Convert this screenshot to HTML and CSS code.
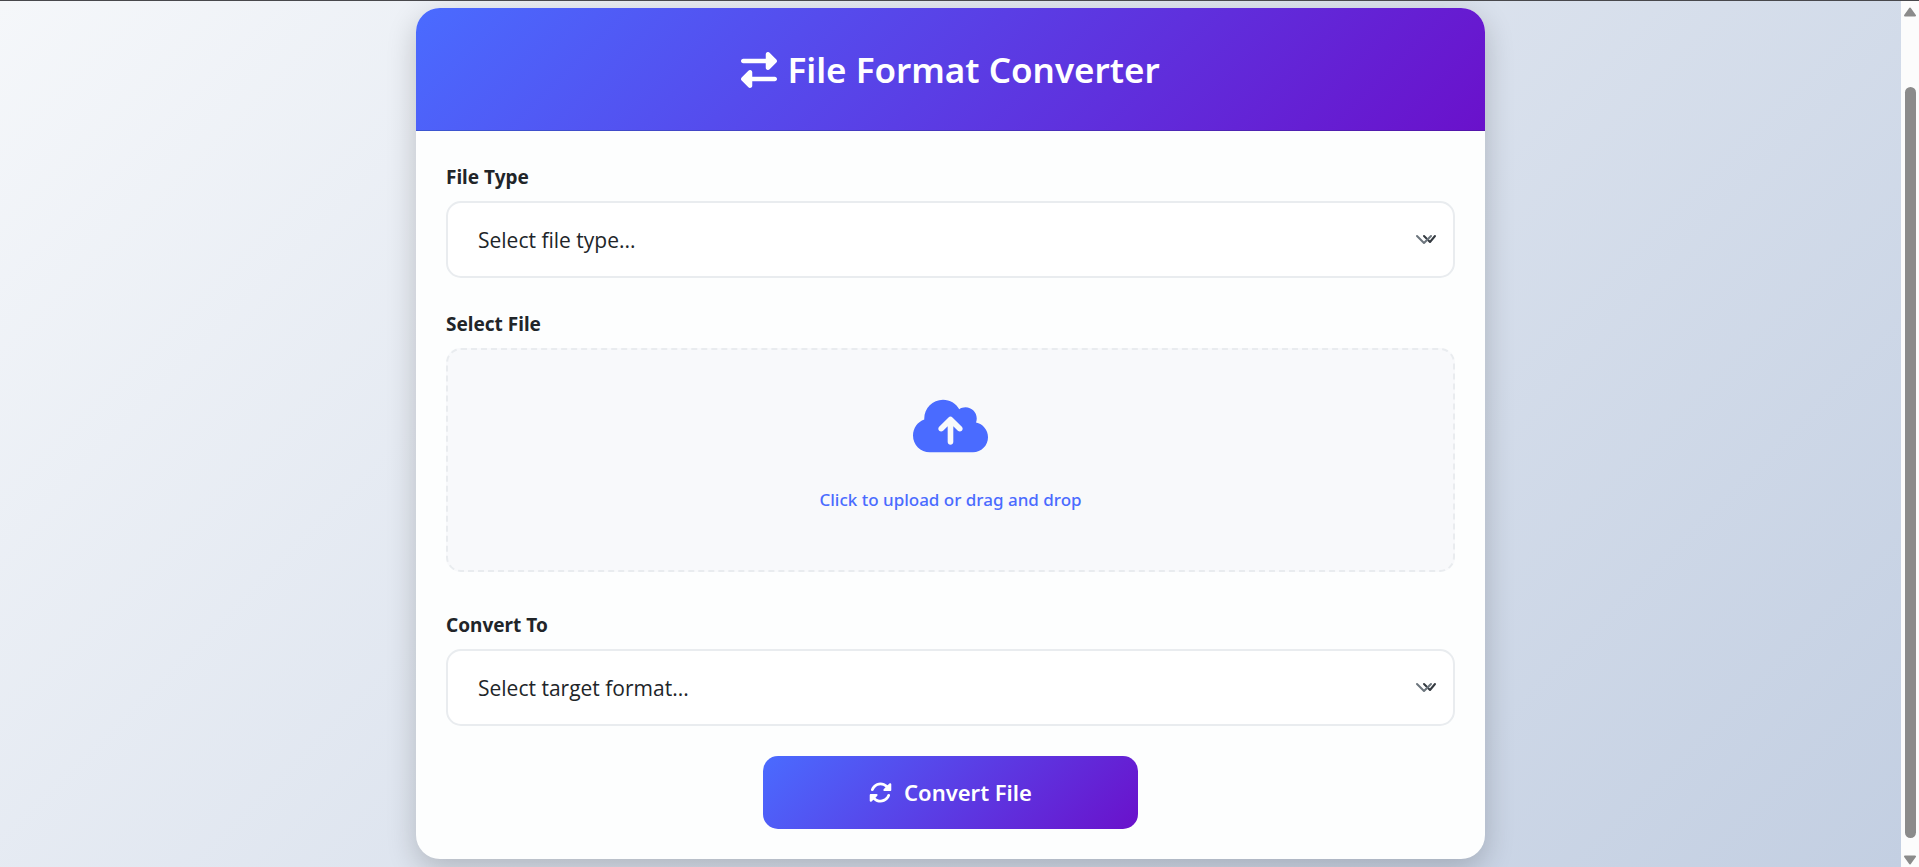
FILE: index.html
```html
<!DOCTYPE html>
<html lang="en">
<head>
<meta charset="utf-8">
<meta name="viewport" content="width=device-width, initial-scale=1">
<title>File Format Converter</title>
<link rel="stylesheet" href="styles.css">
</head>
<body>
<main class="page">
  <section class="card">
    <header class="card-header">
      <h1 class="title">
        <svg class="title-icon" viewBox="0 0 512 512" aria-hidden="true"><path d="M32 96l320 0V32c0-12.900 7.800-24.600 19.800-29.600s25.700-2.200 34.900 6.900l96 96c6 6 9.400 14.100 9.400 22.600s-3.400 16.600-9.400 22.600l-96 96c-9.200 9.200-22.900 11.900-34.900 6.900s-19.800-16.600-19.800-29.600V160L32 160c-17.700 0-32-14.300-32-32s14.300-32 32-32zM480 352c17.700 0 32 14.300 32 32s-14.300 32-32 32H160v64c0 12.900-7.800 24.600-19.800 29.600s-25.700 2.200-34.900-6.900l-96-96c-6-6-9.400-14.100-9.400-22.600s3.400-16.600 9.400-22.600l96-96c9.200-9.200 22.900-11.900 34.900-6.900s19.800 16.600 19.800 29.600l0 64H480z"/></svg>
        <span>File Format Converter</span>
      </h1>
    </header>
    <form class="card-body">
      <div class="field">
        <label class="field-label" for="fileType">File Type</label>
        <div class="select-wrap">
          <select class="select" id="fileType"><option>Select file type...</option></select>
          <svg class="chevrons" viewBox="0 0 22 12" aria-hidden="true"><path class="chevron-dark" d="M9 2l6 6 5-6"/><path class="chevron-gray" d="M2 2l7 7 7-7"/></svg>
        </div>
      </div>
      <div class="field field-upload">
        <label class="field-label" for="file">Select File</label>
        <label class="dropzone">
          <input class="file-input" type="file" id="file">
          <svg class="cloud" viewBox="0 0 640 512" aria-hidden="true"><path d="M144 480C64.500 480 0 415.500 0 336c0-62.800 40.200-116.200 96.200-135.900c-.1-2.700-.2-5.400-.2-8.100c0-88.400 71.600-160 160-160c59.300 0 111 32.200 138.700 80.200C409.900 102 428.300 96 448 96c53 0 96 43 96 96c0 12.200-2.300 23.800-6.400 34.600C596 238.400 640 290.100 640 352c0 70.700-57.300 128-128 128H144zm79-217c-9.400 9.400-9.400 24.600 0 33.900s24.600 9.400 33.900 0l39-39V392c0 13.300 10.700 24 24 24s24-10.700 24-24V257.900l39 39c9.400 9.400 24.600 9.400 33.900 0s9.400-24.600 0-33.900l-80-80c-9.400-9.400-24.600-9.400-33.900 0l-80 80z"/></svg>
          <span class="dropzone-text">Click to upload or drag and drop</span>
        </label>
      </div>
      <div class="field">
        <label class="field-label" for="target">Convert To</label>
        <div class="select-wrap">
          <select class="select" id="target"><option>Select target format...</option></select>
          <svg class="chevrons" viewBox="0 0 22 12" aria-hidden="true"><path class="chevron-dark" d="M9 2l6 6 5-6"/><path class="chevron-gray" d="M2 2l7 7 7-7"/></svg>
        </div>
      </div>
      <button class="convert" type="button">
        <svg class="convert-icon" viewBox="0 0 512 512" aria-hidden="true"><path d="M142.900 142.900c62.200-62.200 162.700-62.500 225.300-1L327 183c-6.900 6.900-8.900 17.200-5.200 26.200s12.500 14.800 22.200 14.800H472c13.300 0 24-10.700 24-24V72c0-9.700-5.800-18.500-14.800-22.200s-19.300-1.700-26.200 5.200L413.400 96.600c-87.600-86.500-228.700-86.200-315.800 1C73.200 122 55.600 150.700 44.800 181.400c-5.900 16.700 2.900 34.900 19.500 40.800s34.900-2.900 40.800-19.500c7.700-21.800 20.200-42.300 37.800-59.800zM16 312V440c0 9.700 5.800 18.500 14.800 22.200s19.300 1.700 26.200-5.200l41.600-41.600c87.600 86.500 228.700 86.200 315.800-1c24.400-24.400 42.100-53.100 52.900-83.700c5.900-16.700-2.900-34.900-19.500-40.800s-34.900 2.900-40.800 19.500c-7.700 21.800-20.200 42.300-37.800 59.800c-62.200 62.200-162.700 62.500-225.300 1L185 329c6.900-6.900 8.900-17.200 5.200-26.200s-12.500-14.800-22.200-14.800H40c-13.300 0-24 10.700-24 24z"/></svg>
        <span>Convert File</span>
      </button>
    </form>
  </section>
</main>
<div class="scrollbar" aria-hidden="true">
  <svg class="scroll-arrow" viewBox="0 0 12 10"><path d="M6 1.500L11 8.500H1z"/></svg>
  <div class="scroll-track"><div class="scroll-thumb"></div></div>
  <svg class="scroll-arrow" viewBox="0 0 12 10"><path d="M6 8.500L11 1.500H1z"/></svg>
</div>
</body>
</html>
```
FILE: styles.css
```css
* {
  box-sizing: border-box;
}

body {
  margin: 0;
  min-height: 100vh;
  display: flex;
  border-top: 1px solid #48484c;
  font-family: "Segoe UI", "Noto Sans", "Open Sans", sans-serif;
  color: #212529;
}

.page {
  flex: 1;
  padding: 7px 16px 5px;
  overflow: hidden;
  background: linear-gradient(135deg, #f5f7fa, #c3cfe2);
}

.card {
  max-width: 1069px;
  margin: 0 auto;
  border-radius: 24px;
  overflow: hidden;
  background: #fdfefe;
  box-shadow: 0 10px 30px rgba(0, 0, 0, 0.2);
}

.card-header {
  padding: 38px 30px 36px;
  border-bottom: 1px solid rgba(0, 0, 0, 0.18);
  background: linear-gradient(135deg, #4a6bff, #6a11cb);
  color: #fff;
}

.title {
  display: flex;
  justify-content: center;
  align-items: center;
  gap: 10px;
  margin: 0;
  font-size: 35px;
  line-height: 48px;
  font-weight: 600;
}

.title-icon {
  width: 36px;
  height: 36px;
  fill: currentColor;
}

.card-body {
  display: flex;
  flex-direction: column;
  padding: 30px;
}

.field {
  display: flex;
  flex-direction: column;
  gap: 8px;
  margin-bottom: 30px;
}

.field-upload {
  margin-bottom: 37px;
}

.field-label {
  font-size: 19px;
  line-height: 32px;
  font-weight: 700;
}

.select-wrap {
  display: grid;
  align-items: center;
}

.select-wrap > * {
  grid-area: 1 / 1;
}

.select {
  appearance: none;
  width: 100%;
  padding: 21px 30px 19px;
  border: 2px solid #e9ecef;
  border-radius: 15px;
  background: #fff;
  color: #212529;
  font-family: "Segoe UI", "Open Sans", "Noto Sans", sans-serif;
  font-size: 21px;
  line-height: 33px;
}

.chevrons {
  justify-self: end;
  width: 22px;
  height: 12px;
  margin-right: 18px;
  fill: none;
  stroke-width: 2;
  stroke-linecap: round;
  stroke-linejoin: round;
  pointer-events: none;
}

.chevron-dark {
  stroke: #343a40;
}

.chevron-gray {
  stroke: #6c757d;
}

.dropzone {
  display: flex;
  flex-direction: column;
  align-items: center;
  gap: 29px;
  padding: 46px 30px 55px;
  border: 2px dashed #e9ecef;
  border-radius: 15px;
  background: #f8f9fb;
  color: #4a6bff;
  cursor: pointer;
}

.file-input {
  position: absolute;
  width: 1px;
  height: 1px;
  opacity: 0;
}

.cloud {
  width: 75px;
  height: 60px;
  fill: currentColor;
}

.dropzone-text {
  font-size: 17px;
  line-height: 30px;
  font-weight: 500;
}

.convert {
  display: flex;
  justify-content: center;
  align-items: center;
  gap: 12px;
  align-self: center;
  width: 100%;
  max-width: 375px;
  padding: 20px;
  border: 0;
  border-radius: 15px;
  background: linear-gradient(135deg, #4a6bff, #6a11cb);
  color: #fff;
  font: inherit;
  font-size: 22px;
  line-height: 33px;
  font-weight: 600;
}

.convert-icon {
  width: 23px;
  height: 23px;
  fill: currentColor;
}

.scrollbar {
  display: flex;
  flex-direction: column;
  align-items: center;
  width: 18px;
  padding: 6px 0 2px;
  background: #fcfcfc;
}

.scroll-arrow {
  width: 12px;
  height: 10px;
  fill: #8b8b8b;
  stroke: #8b8b8b;
  stroke-width: 2;
  stroke-linejoin: round;
}

.scroll-track {
  display: flex;
  flex: 1;
  padding: 70px 0 17px;
}

.scroll-thumb {
  width: 11px;
  border-radius: 6px;
  background: #8b8b8b;
}
```
